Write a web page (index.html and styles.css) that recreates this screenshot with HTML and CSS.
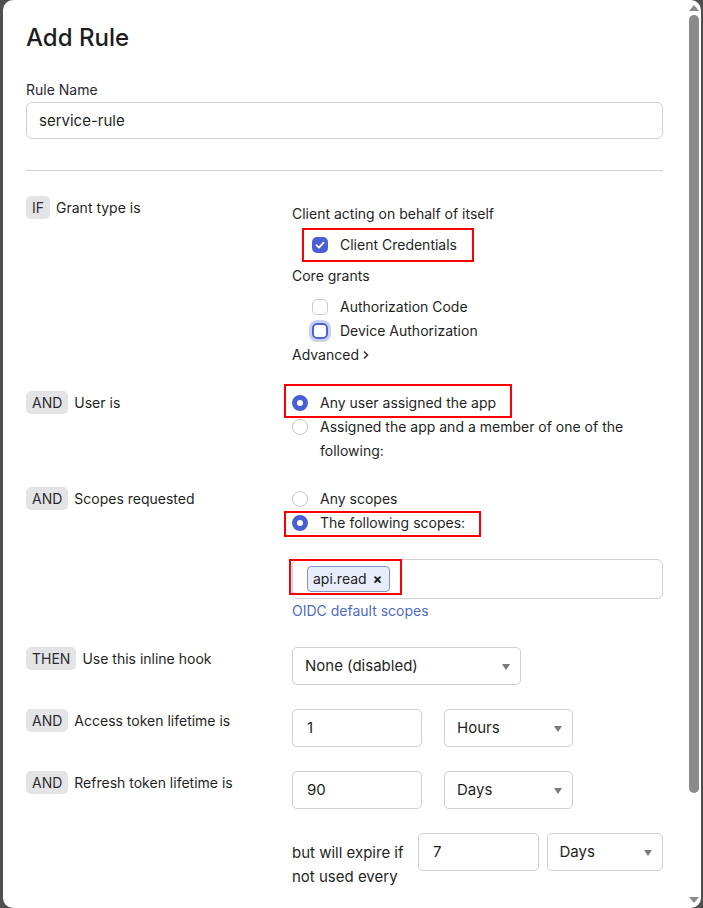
FILE: index.html
```html
<!DOCTYPE html>
<html lang="en">

<head>
    <meta charset="UTF-8">
    <meta name="viewport" content="width=device-width, initial-scale=1.0">
    <title>Add Rule</title>
    <link rel="stylesheet" href="styles.css">
</head>

<body>
    <div class="modal">
        <div class="content">
            <h1 class="title">Add Rule</h1>

            <div class="field-label">Rule Name</div>
            <div class="text-input">service-rule</div>

            <hr class="divider">

            <div class="rules">
                <!-- IF grant type -->
                <div class="cond"><span class="badge">IF</span><span>Grant type is</span></div>
                <div class="opts grant">
                    <div class="group-title">Client acting on behalf of itself</div>
                    <div class="checks">
                        <div class="check-item"><span class="mark mark-client"><span class="checkbox checked"><svg width="16" height="16" viewBox="0 0 16 16"><polyline points="4.5,8.2 7,10.6 11.5,5.6" fill="none" stroke="#fff" stroke-width="1.8" stroke-linecap="round" stroke-linejoin="round"/></svg></span>Client Credentials</span></div>
                    </div>
                    <div class="group-title">Core grants</div>
                    <div class="checks">
                        <div class="check-item"><span class="checkbox"></span>Authorization Code</div>
                        <div class="check-item"><span class="checkbox focused"></span>Device Authorization</div>
                    </div>
                    <div class="advanced">Advanced <svg width="8" height="10" viewBox="0 0 8 10"><polyline points="2,1.5 5.5,5 2,8.5" fill="none" stroke="#333" stroke-width="1.6"/></svg></div>
                </div>

                <!-- AND user -->
                <div class="cond"><span class="badge">AND</span><span>User is</span></div>
                <div class="opts">
                    <div class="radio-item"><span class="mark mark-user"><span class="radio checked"></span>Any user assigned the app</span></div>
                    <div class="radio-item"><span class="radio"></span><span>Assigned the app and a member of one of the following:</span></div>
                </div>

                <!-- AND scopes -->
                <div class="cond"><span class="badge">AND</span><span>Scopes requested</span></div>
                <div class="opts">
                    <div class="radio-item"><span class="radio"></span>Any scopes</div>
                    <div class="radio-item"><span class="mark mark-scopes"><span class="radio checked"></span>The following scopes:</span></div>
                    <div class="chips-input">
                        <span class="mark mark-chip"><span class="chip">api.read <span class="chip-x">&times;</span></span></span>
                    </div>
                    <a class="link">OIDC default scopes</a>
                </div>

                <!-- THEN hook -->
                <div class="cond"><span class="badge">THEN</span><span>Use this inline hook</span></div>
                <div class="opts">
                    <div class="select hook">None (disabled)</div>
                </div>

                <!-- AND access token -->
                <div class="cond"><span class="badge">AND</span><span>Access token lifetime is</span></div>
                <div class="opts pair">
                    <div class="box-input">1</div>
                    <div class="select">Hours</div>
                </div>

                <!-- AND refresh token -->
                <div class="cond"><span class="badge">AND</span><span>Refresh token lifetime is</span></div>
                <div class="opts pair">
                    <div class="box-input">90</div>
                    <div class="select">Days</div>
                </div>

                <div class="cond"></div>
                <div class="opts expire">
                    <div class="expire-text">but will expire if not used every</div>
                    <div class="box-input">7</div>
                    <div class="select">Days</div>
                </div>
            </div>
        </div>

        <div class="scrollbar">
            <span class="arrow up"></span>
            <span class="thumb"></span>
            <span class="arrow down"></span>
        </div>
    </div>
</body>

</html>
```

FILE: styles.css
```css
body {
    margin: 0;
    height: 908px;
    overflow: hidden;
    background-color: #4f4f4f;
    font-family: Inter, "Liberation Sans", sans-serif;
    font-size: 14px;
    color: #1f1f23;
}

.modal {
    display: flex;
    margin-left: 3px;
    width: 698px;
    height: 908px;
    background-color: #fff;
    border-radius: 10px;
    overflow: hidden;
}

.content {
    flex: 1;
    padding: 22px 24px 0 23px;
}

.title {
    margin: 0;
    font-size: 24px;
    font-weight: 500;
    line-height: 32px;
    color: #1d1d21;
}

.field-label {
    margin-top: 26px;
    line-height: 20px;
    color: #2a2a2e;
}

.text-input {
    margin-top: 2px;
    height: 37px;
    box-sizing: border-box;
    border: 1px solid #d0d0d4;
    border-radius: 6px;
    padding: 0 12px;
    display: flex;
    align-items: center;
    font-size: 15px;
}

.divider {
    margin: 31px 0 0;
    border: none;
    border-top: 1px solid #cfcfd3;
}

.rules {
    margin-top: 25px;
    display: grid;
    grid-template-columns: 266px 1fr;
    row-gap: 24px;
}

.cond {
    display: flex;
    align-items: center;
    gap: 6px;
    height: 23px;
    line-height: 23px;
}

.badge {
    background-color: #e4e4e6;
    border-radius: 5px;
    padding: 0 6px;
    color: #2d2d31;
}

.opts {
    line-height: 24px;
}

.grant {
    padding-top: 6px;
}

.group-title + .checks {
    margin-top: 7px;
}

.checks + .group-title {
    margin-top: 7px;
}

.check-item {
    display: flex;
    align-items: center;
    padding-left: 20px;
}

.checkbox {
    width: 16px;
    height: 16px;
    box-sizing: border-box;
    border: 1.5px solid #c9c9cd;
    border-radius: 5px;
    margin-right: 12px;
    flex-shrink: 0;
}

.checkbox.checked {
    border: none;
    background-color: #4b5fd4;
}

.checkbox svg {
    display: block;
}

.checkbox.focused {
    border: 2px solid #4b62d0;
    box-shadow: 0 0 0 3px rgba(75, 98, 208, 0.3);
}

.advanced {
    display: flex;
    align-items: center;
    gap: 3px;
}

.radio-item {
    display: flex;
    align-items: flex-start;
}

.radio {
    width: 16px;
    height: 16px;
    box-sizing: border-box;
    border: 1.5px solid #c9c9cd;
    border-radius: 50%;
    margin: 4px 12px 0 0;
    flex-shrink: 0;
}

.radio.checked {
    border: 5px solid #4b5fd4;
    background-color: #fff;
}

.mark {
    position: relative;
    display: inline-flex;
    align-items: center;
}

.mark .radio {
    margin-top: 0;
}

.mark::after {
    content: "";
    position: absolute;
    border: 2px solid #f00;
}

.mark-client::after {
    top: -5px;
    bottom: -5px;
    left: -10px;
    right: -17px;
}

.mark-user::after {
    top: -7px;
    bottom: -3px;
    left: -8px;
    right: -16px;
}

.mark-scopes::after {
    top: 0;
    bottom: -2px;
    left: -8px;
    right: -16px;
}

.mark-chip::after {
    top: -7px;
    bottom: -3px;
    left: -18px;
    right: -12px;
}

.chips-input {
    margin-top: 24px;
    height: 40px;
    box-sizing: border-box;
    border: 1px solid #d0d0d4;
    border-radius: 6px;
    padding: 6px 14px;
    display: flex;
    align-items: flex-start;
}

.chip {
    display: inline-flex;
    align-items: center;
    gap: 6px;
    height: 26px;
    box-sizing: border-box;
    padding: 0 7px 0 5px;
    background-color: #e8edfb;
    border: 1px solid #8593c8;
    border-radius: 4px;
}

.chip-x {
    font-weight: 700;
    font-size: 14px;
}

.link {
    display: block;
    color: #4f6bc4;
}

.select,
.box-input {
    height: 38px;
    box-sizing: border-box;
    border: 1px solid #cfcfd3;
    border-radius: 5px;
    display: flex;
    align-items: center;
    font-size: 15px;
}

.box-input {
    padding: 0 14px;
}

.select {
    position: relative;
    padding: 0 12px;
}

.select::after {
    content: "";
    position: absolute;
    right: 10px;
    top: 16px;
    border-left: 4px solid transparent;
    border-right: 4px solid transparent;
    border-top: 6px solid #7a7a7e;
}

.hook {
    width: 229px;
}

.pair {
    display: flex;
    gap: 22px;
}

.pair .box-input {
    width: 130px;
}

.pair .select {
    width: 129px;
}

.expire {
    display: flex;
    gap: 8px;
}

.expire-text {
    width: 112px;
    margin-right: 6px;
    padding-top: 8px;
    font-size: 15px;
}

.expire .box-input,
.expire .select {
    flex: 1;
}

.scrollbar {
    width: 14px;
    display: flex;
    flex-direction: column;
    align-items: center;
}

.arrow {
    width: 0;
    height: 0;
    border-left: 5px solid transparent;
    border-right: 5px solid transparent;
}

.arrow.up {
    margin-top: 5px;
    border-bottom: 6px solid #8a8a8a;
}

.arrow.down {
    margin-top: auto;
    margin-bottom: 5px;
    border-top: 6px solid #8a8a8a;
}

.thumb {
    margin-top: 4px;
    width: 10px;
    height: 778px;
    border-radius: 5px;
    background-color: #8a8a8a;
}
```
